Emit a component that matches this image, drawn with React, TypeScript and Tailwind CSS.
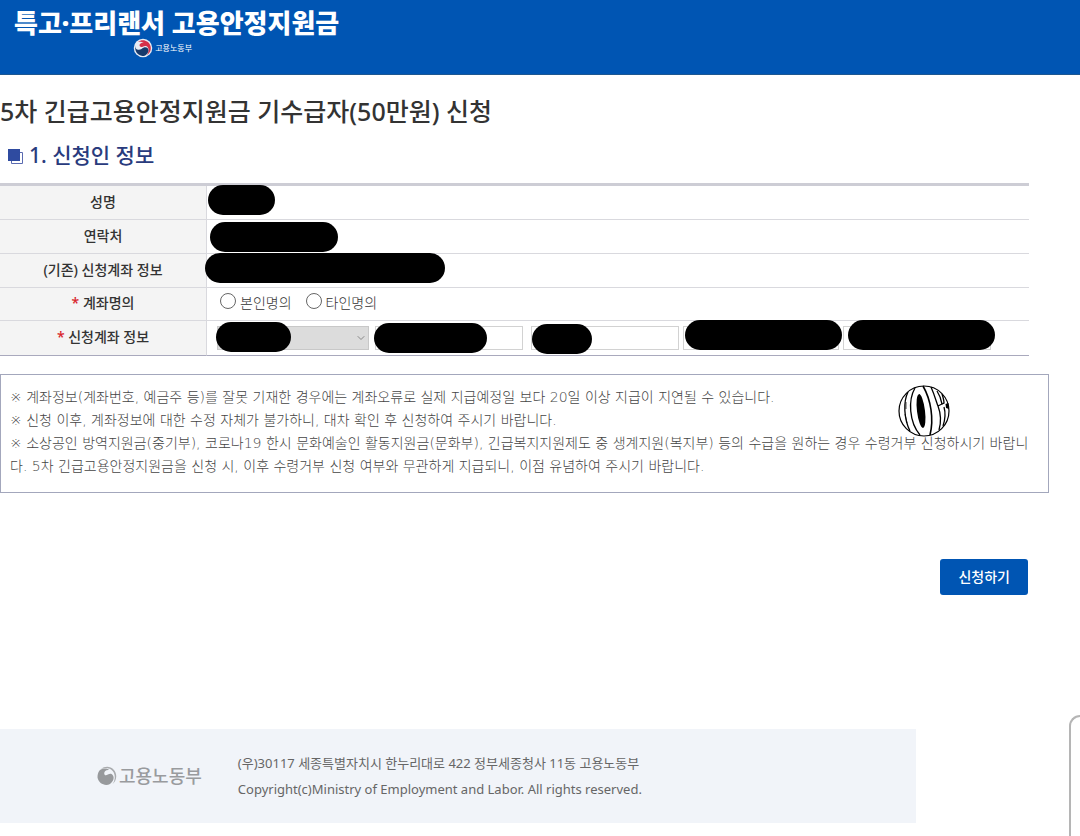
import { useState } from "react";
import { ChevronDown } from "lucide-react";

const FONT = "font-['Noto_Sans','Noto_Sans_CJK_KR',sans-serif]";
const NOTICE_FONT = "font-['DejaVu_Sans','Noto_Sans_CJK_KR',sans-serif]";

function Mark({ className }: { className: string }) {
  return <span aria-hidden="true" className={`absolute h-[30px] rounded-full bg-black ${className}`} />;
}

function HeaderEmblem() {
  return (
    <svg viewBox="0 0 40 40" className="size-5" aria-hidden="true">
      <circle cx="20" cy="20" r="18.5" fill="#e8ecf4" />
      <path d="M10 8 C19 1 32 6 35 16 C37 24 34 30 28 34 C33 26 32 18 26 16 C21 15 18 20 14 17 C11 13 16 9 22 9 C18 7 13 7 10 8Z" fill="#d5304a" />
      <path d="M5 14 C3 24 12 25 17 22 C23 16 31 18 31 25 C30 32 25 36 19 36 C9 35 2 25 5 14Z" fill="#173a6c" />
    </svg>
  );
}

function FooterEmblem() {
  return (
    <svg viewBox="0 0 40 40" className="size-5" aria-hidden="true">
      <path d="M8 6 C15 0 27 0 33 7 C42 16 39 30 31 36 C38 27 37 13 28 7 C22 3 14 3 8 6Z" fill="#a9abae" />
      <path d="M5 9 C11 4 20 4 24 8 C17 7 13 12 15 17 C18 22 23 14 29 16 C36 20 34 31 26 36 C16 41 3 35 1 23 C1 17 2 13 5 9Z" fill="#97999c" />
    </svg>
  );
}

function SquaresIcon() {
  return (
    <svg viewBox="0 0 15 15" className="size-[15px]" aria-hidden="true">
      <path d="M12 3.5h2.5v11h-11V12" fill="none" stroke="#5a6ab0" />
      <rect width="12" height="12" fill="#2f4ba0" />
    </svg>
  );
}

function Ball() {
  return (
    <svg viewBox="0 0 52 52" className="absolute top-[10px] right-[98px] size-[52px]" aria-hidden="true">
      <circle cx="26" cy="26" r="25" fill="#fff" stroke="#000" strokeWidth="1.2" />
      <g fill="none" stroke="#000" strokeWidth="1.3">
        <path d="M10 7C5 17 6 34 12 46" />
        <path d="M8 17V24M7 29L9 38" strokeWidth=".7" />
        <path d="M17 3C10 15 11 37 22 50" />
        <path d="M25 1C33 15 36 34 32 50" strokeWidth="1.6" />
        <path d="M33 2C37 11 39 19 40 21L44 19C43 14 41 9 39 6M40 21C43 29 43 38 41 45" />
        <path d="M44 9C45 12 46 15 46 18L44 19M46 22C48 29 47 35 45 41" />
      </g>
      <ellipse cx="23" cy="26" rx="4" ry="17" transform="rotate(-7 23 26)" />
      <path d="M47.500 19L50.500 18L51 24L48 23Z" />
    </svg>
  );
}

const th = "border-r border-b border-[#d9d9de] bg-[#f4f4f4] px-0 pt-0 pb-0.5 text-center text-sm leading-5 font-medium text-[#333]";
const td = "relative border-b border-[#d9d9de] p-0";
const field = "h-6 border border-[#d2d2d2] bg-white px-1 text-sm";

function ApplicantTable() {
  const [owner, setOwner] = useState("");

  return (
    <table className="w-full table-fixed border-separate border-spacing-0 border-t-[3px] border-[#cdcdd5]">
      <colgroup>
        <col className="w-[207px]" />
        <col />
      </colgroup>
      <tbody>
        <tr className="h-[34px]">
          <th scope="row" className={th}>성명</th>
          <td className={td}><Mark className="-top-px left-px w-[67px]" /></td>
        </tr>
        <tr className="h-[34px]">
          <th scope="row" className={th}>연락처</th>
          <td className={td}><Mark className="top-0.5 left-[3px] w-32" /></td>
        </tr>
        <tr className="h-[34px]">
          <th scope="row" className={th}>(기존) 신청계좌 정보</th>
          <td className={td}><Mark className="-top-px -left-0.5 w-60" /></td>
        </tr>
        <tr className="h-[33px]">
          <th scope="row" className={th}><span className="text-[#d8232a]">*</span> 계좌명의</th>
          <td className={`${td} pb-0.5`}>
            <div className="flex items-center gap-3.5 pl-[13px] text-sm font-light text-[#333]">
              {["본인명의", "타인명의"].map((label) => (
                <label key={label} className="flex items-start gap-1">
                  <input
                    type="radio"
                    name="owner"
                    checked={owner === label}
                    onChange={() => setOwner(label)}
                    className="size-4 appearance-none rounded-full border border-[#666] bg-white checked:border-4"
                  />
                  {label}
                </label>
              ))}
            </div>
          </td>
        </tr>
        <tr className="h-[35px]">
          <th scope="row" className={`${th} border-b-[#a9a9bd]`}><span className="text-[#d8232a]">*</span> 신청계좌 정보</th>
          <td className={`${td} border-b-[#a9a9bd]`}>
            <div className="flex items-center pl-2.5">
              <div className="relative mr-1.5">
                <select aria-label="은행" className="block h-6 w-[152px] appearance-none border border-[#c8c8c8] bg-[#dcdcdc]" />
                <ChevronDown className="pointer-events-none absolute top-1.5 right-0.5 size-3 text-[#888]" />
              </div>
              <input aria-label="계좌번호" className={`${field} mr-2 w-[148px]`} />
              <input aria-label="예금주" className={`${field} mr-1 w-[148px]`} />
              <input aria-label="계좌번호 확인" className={`${field} mr-1 w-[156px]`} />
              <input aria-label="예금주 확인" className={`${field} w-[148px]`} />
            </div>
            <Mark className="top-px left-[9px] w-[75px]" />
            <Mark className="top-0.5 left-[167px] w-[113px]" />
            <Mark className="top-[3px] left-[325px] w-[60px]" />
            <Mark className="-top-px left-[478px] w-[157px]" />
            <Mark className="-top-px left-[641px] w-[147px]" />
          </td>
        </tr>
      </tbody>
    </table>
  );
}

export default function App() {
  return (
    <div className={`relative flex min-h-screen flex-col bg-white ${FONT}`}>
      <header className="h-[75px] border-b border-[#1d5791] bg-[#0055b3] px-[14px] pt-2 text-white">
        <div className="flex w-fit flex-col items-center">
          <p className="text-[26px] leading-[30px] font-black whitespace-nowrap">특고·프리랜서 고용안정지원금</p>
          <div className="flex items-center gap-0.5 pr-7 text-[8px] leading-5">
            <HeaderEmblem />
            고용노동부
          </div>
        </div>
      </header>

      <main>
        <h1 className="pt-[18px] text-[25px] leading-9 font-medium text-[#333]">
          5차 긴급고용안정지원금 기수급자(50만원) 신청
        </h1>
        <h2 className="mt-3 flex h-[30px] items-center gap-1.5 pl-2 text-[21px] font-medium text-[#293b7d]">
          <SquaresIcon />
          1. 신청인 정보
        </h2>

        <div className="mt-3 mr-[51px]">
          <ApplicantTable />
        </div>

        <div className={`relative mt-[18px] mr-[31px] border border-[#a3a7bc] pt-[11px] pr-1 pb-[14px] pl-[9px] text-sm leading-[23px] font-light text-[#444] ${NOTICE_FONT}`}>
          <p>※ 계좌정보(계좌번호, 예금주 등)를 잘못 기재한 경우에는 계좌오류로 실제 지급예정일 보다 20일 이상 지급이 지연될 수 있습니다.</p>
          <p>※ 신청 이후, 계좌정보에 대한 수정 자체가 불가하니, 대차 확인 후 신청하여 주시기 바랍니다.</p>
          <p>
            ※ 소상공인 방역지원금(중기부), 코로나19 한시 문화예술인 활동지원금(문화부), 긴급복지지원제도 중 생계지원(복지부) 등의 수급을 원하는 경우 수령거부 신청하시기 바랍니<br />
            다. 5차 긴급고용안정지원금을 신청 시, 이후 수령거부 신청 여부와 무관하게 지급되니, 이점 유념하여 주시기 바랍니다.
          </p>
          <Ball />
        </div>

        <div className="mt-[66px] mr-[52px] flex justify-end">
          <button type="button" className="h-9 rounded-[3px] bg-[#0055b3] px-[18px] text-sm font-medium text-white">
            신청하기
          </button>
        </div>
      </main>

      <footer className="mt-[134px] mr-41 flex h-[94px] items-center bg-[#f1f4f9] pl-[97px]">
        <div className="flex items-center gap-0.5 text-lg font-medium text-[#999b9e]">
          <FooterEmblem />
          고용노동부
        </div>
        <address className="ml-9 text-[13px] leading-[26px] text-[#666] not-italic">
          <p>(우)30117 세종특별자치시 한누리대로 422 정부세종청사 11동 고용노동부</p>
          <p>Copyright(c)Ministry of Employment and Labor. All rights reserved.</p>
        </address>
      </footer>

      <div className="absolute right-0 bottom-0 h-[121px] w-[11px] rounded-tl-[14px] border-t-2 border-l-2 border-[#b5b5b5] bg-white" />
    </div>
  );
}
